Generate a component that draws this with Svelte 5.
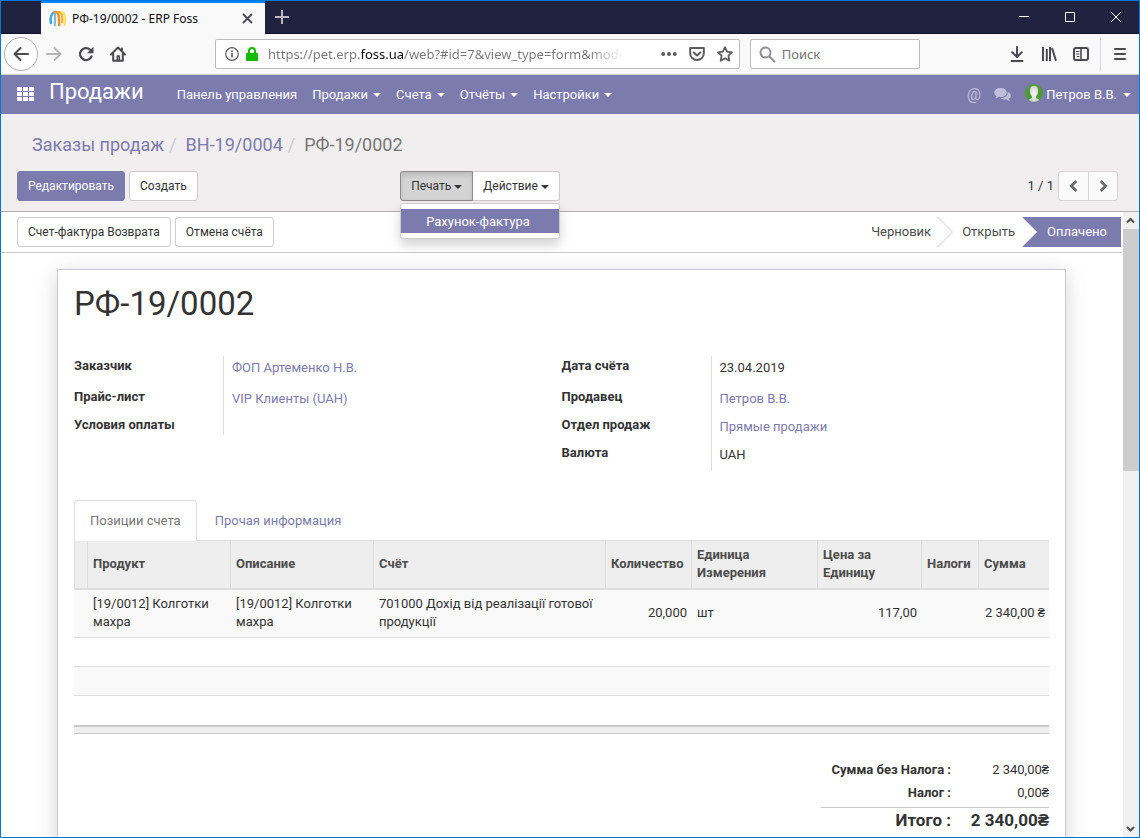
<script>
  const menu = ['Продажи', 'Счета', 'Отчёты', 'Настройки'];
  const left = [
    { label: 'Заказчик', value: 'ФОП Артеменко Н.В.', link: true },
    { label: 'Прайс-лист', value: 'VIP Клиенты (UAH)', link: true },
    { label: 'Условия оплаты', value: '' }
  ];
  const right = [
    { label: 'Дата счёта', value: '23.04.2019' },
    { label: 'Продавец', value: 'Петров В.В.', link: true },
    { label: 'Отдел продаж', value: 'Прямые продажи', link: true },
    { label: 'Валюта', value: 'UAH' }
  ];
  let url = $state('https://pet.erp.foss.ua/web?#id=7&view_type=form&model=account.invoice');
  let query = $state('');
</script>

<div class="window">
  <header class="titlebar">
    <div class="tab">
      <svg width="18" height="18" viewBox="0 0 18 18" fill="none" stroke-linecap="round">
        <path d="M1.900 13C1 8 2.400 3.600 5.400 2.400" stroke="#45a5de" stroke-width="2.600" />
        <path d="M5.600 2.600C6.600 6 6.200 10 5.800 15" stroke="#6cc0ea" stroke-width="2.200" />
        <path d="M6.500 2.200C9 1.600 10.300 4 10.200 15" stroke="#f2922a" stroke-width="2.600" />
        <path d="M9.800 2.200C12.600 1.600 13.600 4.500 13.200 12.500" stroke="#f8b02e" stroke-width="2.200" />
        <path d="M13.200 2.400C16 3 17 8 15.600 14.800" stroke="#fde36a" stroke-width="2.400" />
      </svg>
      <span>РФ-19/0002 - ERP Foss</span>
      <button class="icon" aria-label="Закрыть вкладку">
        <svg width="11" height="11" viewBox="0 0 11 11" stroke="#4a4a4f" stroke-width="1.800"><path d="M1 1l9 9M10 1l-9 9" /></svg>
      </button>
    </div>
    <button class="icon plus" aria-label="Новая вкладка">
      <svg width="14" height="14" viewBox="0 0 14 14" stroke="#b9b9c2" stroke-width="2"><path d="M7 0v14M0 7h14" /></svg>
    </button>
    <div class="winbtns">
      <button class="icon" aria-label="Свернуть"><svg width="10" height="10" viewBox="0 0 10 10" stroke="#fff"><path d="M0 4.500h10" /></svg></button>
      <button class="icon" aria-label="Развернуть"><svg width="10" height="10" viewBox="0 0 10 10" stroke="#fff" fill="none"><path d="M.5.500h9v9h-9z" /></svg></button>
      <button class="icon" aria-label="Закрыть"><svg width="10" height="10" viewBox="0 0 10 10" stroke="#fff"><path d="M0 0l10 10M10 0L0 10" /></svg></button>
    </div>
  </header>

  <div class="toolbar">
    <button class="icon back" aria-label="Назад">
      <svg width="16" height="16" viewBox="0 0 16 16" fill="none" stroke="#4a4a4f" stroke-width="2" stroke-linecap="round" stroke-linejoin="round"><path d="M15 8H1.500M7.500 2l-6 6 6 6" /></svg>
    </button>
    <button class="icon nav" aria-label="Вперёд">
      <svg width="16" height="16" viewBox="0 0 16 16" fill="none" stroke="#b4b4b6" stroke-width="2" stroke-linecap="round" stroke-linejoin="round"><path d="M1 8h13.500M8.500 2l6 6-6 6" /></svg>
    </button>
    <button class="icon nav" aria-label="Обновить">
      <svg width="16" height="16" viewBox="0 0 16 16" fill="none" stroke="#4a4a4f" stroke-width="2.200" stroke-linecap="round"><path d="M13.500 10.500A6 6 0 1 1 12 3.600" /><path d="M15.500.8v6.400H9z" fill="#4a4a4f" stroke="none" /></svg>
    </button>
    <button class="icon nav" aria-label="Домой">
      <svg width="16" height="16" viewBox="0 0 16 16" fill="none" stroke="#4a4a4f" stroke-width="2" stroke-linejoin="round" stroke-linecap="round"><path d="M1 8.500L8 1.500l7 7M3.200 8v6.800h9.600V8" /><path d="M7.300 14.500V10h2v4.500" stroke-width="1.600" /><path d="M12 2.500v2" /></svg>
    </button>
    <div class="space"></div>
    <div class="urlbar">
      <svg width="14" height="14" viewBox="0 0 14 14" fill="none" stroke="#5c5c61"><circle cx="7" cy="7" r="6.300" stroke-width="1.200" /><path d="M7 6v4.500M7 3.200v1.600" stroke-width="1.600" /></svg>
      <svg class="lock" width="12" height="14" viewBox="0 0 12 14"><path d="M3 7V4a3 3 0 0 1 6 0v3" fill="none" stroke="#12bc00" stroke-width="2" /><rect y="6" width="12" height="8" rx="1" fill="#12bc00" /></svg>
      <input class="url" aria-label="Адрес" bind:value={url} />
      <button class="icon" aria-label="Действия на странице"><svg width="16" height="16" viewBox="0 0 16 16" fill="#5c5c61"><circle cx="2.200" cy="8" r="2" /><circle cx="8" cy="8" r="2" /><circle cx="13.800" cy="8" r="2" /></svg></button>
      <button class="icon" aria-label="Pocket"><svg width="16" height="16" viewBox="0 0 16 16" fill="none" stroke="#5c5c61" stroke-width="2" stroke-linejoin="round" stroke-linecap="round"><path d="M1.200 2h13.600v5.500a6.800 6.500 0 0 1-13.600 0z" /><path d="M4.800 6.500L8 9.500l3.200-3" /></svg></button>
      <button class="icon" aria-label="В закладки"><svg width="16" height="16" viewBox="0 0 16 16" fill="none" stroke="#5c5c61" stroke-width="1.800" stroke-linejoin="round"><path d="M8 1.200l2.100 4.500 4.900.6-3.600 3.400.9 5L8 12.300l-4.300 2.400.9-5L1 6.300l4.900-.6z" /></svg></button>
    </div>
    <div class="search">
      <svg width="17" height="17" viewBox="0 0 17 17" fill="none" stroke="#8f8f93" stroke-width="2"><circle cx="6.500" cy="6.500" r="5" /><path d="M10.200 10.200l5.800 5.800" /></svg>
      <input aria-label="Поиск" placeholder="Поиск" bind:value={query} />
    </div>
    <div class="space"></div>
    <button class="icon nav" aria-label="Загрузки"><svg width="16" height="16" viewBox="0 0 16 16" fill="none" stroke="#4a4a4f" stroke-width="2" stroke-linecap="round" stroke-linejoin="round"><path d="M8 1v9.500M3.200 6.300L8 11l4.800-4.700M2.500 15h11" /></svg></button>
    <button class="icon nav" aria-label="Библиотека"><svg width="16" height="16" viewBox="0 0 16 16" fill="none" stroke="#4a4a4f" stroke-width="2"><path d="M2 1v14M5.800 3v12M9 1v14M11 2l4 12.800" /></svg></button>
    <button class="icon nav" aria-label="Боковая панель"><svg width="16" height="16" viewBox="0 0 16 16" fill="none" stroke="#4a4a4f" stroke-width="2"><rect x="1" y="2" width="14" height="12" rx="2" /><path d="M8 2v12" stroke-width="1.600" /><path d="M3 5.500h3.500M3 8h3.500M3.800 10.500h2.700" stroke-width="1" /></svg></button>
    <div class="burger"><button class="icon" aria-label="Меню"><svg width="14" height="14" viewBox="0 0 14 14" stroke="#4a4a4f" stroke-width="2" stroke-linecap="round"><path d="M2 2h10M2 7h10M2 12h10" /></svg></button></div>
  </div>

  <nav class="navbar">
    <button class="icon apps" aria-label="Приложения">
      <svg width="18" height="14" viewBox="0 0 18 14" fill="#fff">
        {#each [0, 5, 10] as y}{#each [0, 6, 12] as x}<rect {x} {y} width="5" height="4" rx=".6" />{/each}{/each}
      </svg>
    </button>
    <a class="brand" href="#app">Продажи</a>
    <a href="#panel">Панель управления</a>
    {#each menu as item}
      <a href="#menu">{item}<i class="caret"></i></a>
    {/each}
    <div class="systray">
      <a class="at" href="#mentions">@</a>
      <a class="chat" href="#chat" aria-label="Сообщения">
        <svg width="17" height="15" viewBox="0 0 16 14" fill="#bfbfdc"><path d="M6.200.8C9.700.8 12 2.700 12 5s-2.300 4.300-5.800 4.300c-.6 0-1.100 0-1.600-.1-.9.700-2 1.200-3.300 1.300.6-.6 1-1.300 1.100-2C1 7.700.2 6.400.2 5 .2 2.700 2.700.8 6.200.8z" /><path d="M13 4.600c1.700.6 2.900 1.900 2.900 3.500 0 1.200-.7 2.300-1.900 3 .2.700.6 1.300 1.200 1.900-1.300-.1-2.500-.6-3.400-1.300-2.200.3-4.300-.2-5.600-1.300 4.200-.1 7-2.400 6.800-5.800z" /></svg>
      </a>
      <a class="user" href="#user">
        <svg width="18" height="18" viewBox="0 0 18 18"><defs><radialGradient id="face"><stop offset="0" stop-color="#f7f7f7" /><stop offset="1" stop-color="#cfd2cf" /></radialGradient></defs><circle cx="9" cy="9" r="9" fill="#4c9b34" /><path d="M9 1.800c2.900 0 4.200 2 4.100 5.200-.1 2.300-.9 4.300-2.100 5.500v1.500c1 .7 2.500.8 3.200 1.900A9 9 0 0 1 3.800 15.900c.7-1.100 2.200-1.200 3.200-1.900v-1.500C5.800 11.300 5 9.300 4.900 7 4.800 3.800 6.100 1.800 9 1.800z" fill="url(#face)" /></svg>
        <span>Петров В.В.</span><i class="caret"></i>
      </a>
    </div>
  </nav>

  <section class="control">
    <ol class="crumbs">
      <li><a href="#orders">Заказы продаж</a></li>
      <li><a href="#bn">ВН-19/0004</a></li>
      <li>РФ-19/0002</li>
    </ol>
    <div class="actions">
      <div class="btns">
        <button class="btn primary">Редактировать</button>
        <button class="btn">Создать</button>
      </div>
      <div class="group">
        <button class="btn open" aria-expanded="true">Печать<i class="caret"></i></button>
        <button class="btn">Действие<i class="caret"></i></button>
        <ul class="dropdown"><li><a href="#print">Рахунок-фактура</a></li></ul>
      </div>
      <div class="pager">
        <span>1 / 1</span>
        <div class="pages">
          <button aria-label="Предыдущая"><svg width="9" height="12" viewBox="0 0 9 12" fill="none" stroke="#6b6b6b" stroke-width="2.800"><path d="M7.300 1L2.300 6l5 5" /></svg></button>
          <button aria-label="Следующая"><svg width="9" height="12" viewBox="0 0 9 12" fill="none" stroke="#6b6b6b" stroke-width="2.800"><path d="M1.700 1l5 5-5 5" /></svg></button>
        </div>
      </div>
    </div>
  </section>

  <div class="content">
    <main class="view">
      <div class="statusbar">
        <div class="btns">
          <button class="btn">Счет-фактура Возврата</button>
          <button class="btn">Отмена счёта</button>
        </div>
        <div class="states">
          <span>Черновик</span>
          <svg width="16" height="30" viewBox="0 0 16 30" fill="none" stroke="#ccc"><path d="M.5 0l15 15-15 15" /></svg>
          <span>Открыть</span>
          <span class="current">Оплачено</span>
        </div>
      </div>

      <article class="sheet">
        <h1>РФ-19/0002</h1>
        <div class="groups">
          {#each [left, right] as fields}
            <dl>
              {#each fields as f}
                <div class="field">
                  <dt>{f.label}</dt>
                  <dd>{#if f.link}<a href="#record">{f.value}</a>{:else}{f.value}{/if}</dd>
                </div>
              {/each}
            </dl>
          {/each}
        </div>

        <div class="tabs" role="tablist">
          <button role="tab" aria-selected="true">Позиции счета</button>
          <button role="tab" aria-selected="false">Прочая информация</button>
        </div>

        <table class="lines">
          <colgroup>
            <col class="handle" /><col class="name" /><col class="name" /><col /><col class="qty" /><col class="uom" /><col class="price" /><col class="tax" /><col class="sum" />
          </colgroup>
          <thead>
            <tr><th></th><th>Продукт</th><th>Описание</th><th>Счёт</th><th>Количество</th><th>Единица Измерения</th><th>Цена за Единицу</th><th>Налоги</th><th>Сумма</th></tr>
          </thead>
          <tbody>
            <tr><td></td><td>[19/0012] Колготки махра</td><td>[19/0012] Колготки махра</td><td>701000 Дохід від реалізації готової продукції</td><td class="num">20,000</td><td>шт</td><td class="num">117,00</td><td></td><td class="num">2 340,00 ₴</td></tr>
            {#each [1, 2, 3] as n (n)}
              <tr class="empty"><td colspan="9"></td></tr>
            {/each}
          </tbody>
          <tfoot><tr><td colspan="9"></td></tr></tfoot>
        </table>

        <table class="totals">
          <tbody>
            <tr><th>Сумма без Налога :</th><td>2 340,00₴</td></tr>
            <tr class="tax-total"><th>Налог :</th><td>0,00₴</td></tr>
            <tr class="total"><th>Итого :</th><td>2 340,00₴</td></tr>
          </tbody>
        </table>
      </article>
    </main>
    <div class="scrollbar" aria-hidden="true">
      <svg width="16" height="17" viewBox="0 0 16 17" fill="none" stroke="#505050" stroke-width="2"><path d="M4 10.500L7.500 7l3.500 3.500" /></svg>
      <div class="track"><div class="thumb"></div></div>
      <svg width="16" height="17" viewBox="0 0 16 17" fill="none" stroke="#505050" stroke-width="2"><path d="M4 7l3.500 3.500L11 7" /></svg>
    </div>
  </div>
</div>

<style>
  :global(body) { margin: 0; }
  .window {
    box-sizing: border-box;
    height: 100vh;
    display: flex;
    flex-direction: column;
    border: 1px solid #0078d7;
    overflow: hidden;
    background: #fff;
    color: #333;
    font: 13px/18px Roboto, sans-serif;
  }
  .window :global(*) { box-sizing: border-box; }
  svg { display: block; flex: none; }
  a { color: #7c7bad; text-decoration: none; }
  button, input { font: inherit; color: inherit; }
  .icon { display: flex; align-items: center; justify-content: center; padding: 0; border: 0; background: none; }

  .titlebar { display: flex; flex: none; height: 33px; background: #202340; border-bottom: 1px solid #150f2c; padding-left: 40px; }
  .tab {
    display: flex; align-items: center; gap: 5px; width: 224px; height: 33px; padding: 0 12px 0 8px;
    background: #f9f9fa; border-top: 2px solid #0a84ff; color: #0c0c0d;
    font: 12px/16px "Noto Sans", sans-serif;
  }
  .tab span { flex: 1; white-space: nowrap; }
  .plus { width: 34px; }
  .winbtns { display: flex; margin-left: auto; }
  .winbtns .icon { width: 46px; }

  .toolbar { display: flex; flex: none; align-items: center; height: 41px; padding-left: 3px; background: #f9f9fa; border-bottom: 1px solid #ccc; }
  .back { width: 34px; height: 34px; border: 1px solid #b1b1b3; border-radius: 50%; background: #fff; }
  .nav { width: 32px; }
  .space { flex: 85; }
  .urlbar, .search {
    display: flex; align-items: center; height: 30px; min-width: 0;
    border: 1px solid #bcbcbe; border-radius: 2px; background: #fff;
    font: 14px/20px "Noto Sans", sans-serif;
  }
  .urlbar { flex: 533; padding: 0 6px 0 9px; gap: 12px; }
  .urlbar .lock { margin-left: -5px; }
  .search { flex: 160; margin-left: 10px; padding: 0 8px; gap: 5px; }
  .toolbar input { flex: 1; min-width: 0; padding: 0; border: 0; outline: 0; background: none; font-size: 13px; }
  .search input { padding-left: 1px; }
  .search input::placeholder { color: #737373; opacity: 1; }
  .toolbar .url {
    margin-right: 20px; margin-left: -2px;
    color: transparent;
    background: linear-gradient(90deg, #777 94px, #0c0c0d 94px 136px, #777 136px 320px, transparent 355px);
    -webkit-background-clip: text;
    background-clip: text;
  }
  .burger { display: flex; align-items: center; justify-content: center; height: 34px; width: 39px; margin-left: 3px; border-left: 1px solid #d7d7db; }

  .navbar { display: flex; flex: none; align-items: center; height: 39px; padding: 0 8px 0 16px; background: #7c7bad; color: #fff; }
  .navbar a { color: #fff; margin-right: 15px; white-space: nowrap; }
  .navbar .apps { margin-bottom: 2px; }
  .navbar .brand { margin: 0 33px 6px 14px; font-size: 22px; line-height: 26px; }
  .caret { display: inline-block; margin-left: 5px; vertical-align: middle; border: 4px solid transparent; border-top-color: currentColor; border-bottom: 0; }
  .systray { display: flex; align-items: center; margin-left: auto; }
  .systray .at { color: #bfbfdc; font-size: 16px; margin-right: 13px; }
  .systray .chat { margin-right: 14px; }
  .systray .user { display: flex; align-items: center; gap: 3px; margin: 0; }
  .user svg { margin-bottom: 4px; }
  .user .caret { margin-left: 3px; }

  .control { flex: none; padding: 18px 21px 10px 16px; background: #f0eeee; border-bottom: 1px solid #afafb0; }
  .crumbs { display: flex; margin: 0 0 13px; padding: 0 15px; list-style: none; font-size: 18px; line-height: 26px; color: #777; }
  .crumbs li + li::before { content: "/"; padding: 0 9px 0 5px; color: #ccc; }
  .actions { display: grid; grid-template-columns: 383fr auto 558fr; align-items: center; }
  .btns { display: flex; gap: 4px; }
  .btn { height: 30px; padding: 0 10px; border: 1px solid #ccc; border-radius: 3px; background: #fff; white-space: nowrap; font-size: 12px; }
  .btn .caret { margin-left: 3px; }
  .primary { background: #7c7bad; border-color: #7c7bad; color: #fff; }
  .group { position: relative; display: flex; }
  .group .btn + .btn { border-left: 0; border-radius: 0 3px 3px 0; }
  .group .open { background: #d4d4d4; border-color: #8c8c8c; border-radius: 3px 0 0 3px; box-shadow: inset 0 3px 5px rgba(0, 0, 0, .125); }
  .dropdown {
    position: absolute; z-index: 2; top: 100%; left: 0; width: 100%; margin: 2px 0 0; padding: 5px 0; list-style: none;
    background: #fff; border: 1px solid #ccc; border-radius: 3px; box-shadow: 0 6px 12px rgba(0, 0, 0, .175);
  }
  .dropdown a { display: block; padding: 4px 25px 2px; background: #7c7bad; color: #fff; white-space: nowrap; }
  .pager { display: flex; align-items: center; justify-content: flex-end; gap: 4px; }
  .pages { display: flex; border: 1px solid #d5d5d5; border-radius: 3px; background: #fafafa; }
  .pages button { display: flex; align-items: center; justify-content: center; width: 29px; height: 28px; padding: 0; border: 0; background: none; }
  .pages button + button { border-left: 1px solid #d5d5d5; }

  .content { display: flex; flex: 1; min-height: 0; }
  .view { flex: 1; min-width: 0; overflow: hidden; }
  .statusbar { display: flex; justify-content: space-between; align-items: center; height: 41px; padding: 0 1px 0 16px; border-bottom: 1px solid #ccc; }
  .states { display: flex; align-items: center; color: #4c4c4c; }
  .states svg { margin: 0 9px 0 6px; }
  .current { margin-left: 7px; padding: 6px 14px 6px 25px; background: #7c7bad; color: #fff; clip-path: polygon(0 0, 100% 0, 100% 100%, 0 100%, 15px 50%); }

  .sheet { margin: 16px 56px; padding: 16px; border: 1px solid #c8c8d3; background: #fff; box-shadow: 0 5px 20px rgba(0, 0, 0, .17); min-height: 650px; }
  h1 { margin: 0 0 34px; font-size: 33px; line-height: 36px; font-weight: 400; }
  .groups { display: grid; grid-template-columns: 1fr 1fr; align-items: start; margin-bottom: 29px; }
  dl { margin: 0; }
  .field { display: grid; grid-template-columns: 149px 1fr; height: 28px; }
  .field:first-child { height: 31px; }
  dl .field:last-child:nth-child(3) { height: 20px; }
  dt { font-weight: 700; line-height: 20px; }
  dd { margin: 0; padding: 2px 8px 0; line-height: 20px; border-left: 1px solid #ddd; }

  .tabs { display: flex; margin-bottom: -1px; }
  .tabs button { height: 41px; padding: 0 15px; border: 1px solid transparent; border-radius: 4px 4px 0 0; background: none; color: #7c7bad; margin-right: 2px; }
  .tabs button[aria-selected="true"] { position: relative; border-color: #ddd; border-bottom-color: #fff; background: #fff; color: #777; }
  table { border-collapse: separate; border-spacing: 0; }
  .lines { width: 100%; table-layout: fixed; border-top: 1px solid #ddd; }
  .handle { width: 13px; }
  .name { width: 143px; }
  .qty { width: 86px; }
  .uom { width: 126px; }
  .price { width: 104px; }
  .tax { width: 57px; }
  .sum { width: 71px; }
  .lines th { padding: 5px 4px 6px 5px; text-align: left; color: #4c4c4c; background: #eee; border-left: 1px solid #ddd; border-bottom: 2px solid #ddd; }
  .lines td { padding: 5px 4px 6px 6px; border-bottom: 1px solid #ddd; }
  .lines tbody tr:nth-child(odd) { background: #f9f9f9; }
  .lines .num { text-align: right; padding-left: 0; white-space: nowrap; }
  .lines .empty td { height: 29px; padding: 0; }
  .lines .empty:last-child td { border-bottom: 0; }
  .lines tfoot td { height: 9px; padding: 0; background: #eee; border-top: 2px solid #cacaca; border-bottom: 1px solid #cacaca; }

  .totals { width: 228px; margin: 24px 0 0 auto; }
  .totals th, .totals td { padding: 0; height: 23px; line-height: 23px; text-align: right; white-space: nowrap; }
  .totals .tax-total > * { height: 26px; vertical-align: top; }
  .totals .total > * { height: 26px; border-top: 1px solid #cacaca; font-size: 17px; font-weight: 700; }
  .totals th { width: 130px; }

  .scrollbar { display: flex; flex-direction: column; width: 17px; background: #f0f0f0; border-left: 1px solid #fff; }
  .track { flex: 1; }
  .thumb { height: 41%; background: #cdcdcd; }
</style>
